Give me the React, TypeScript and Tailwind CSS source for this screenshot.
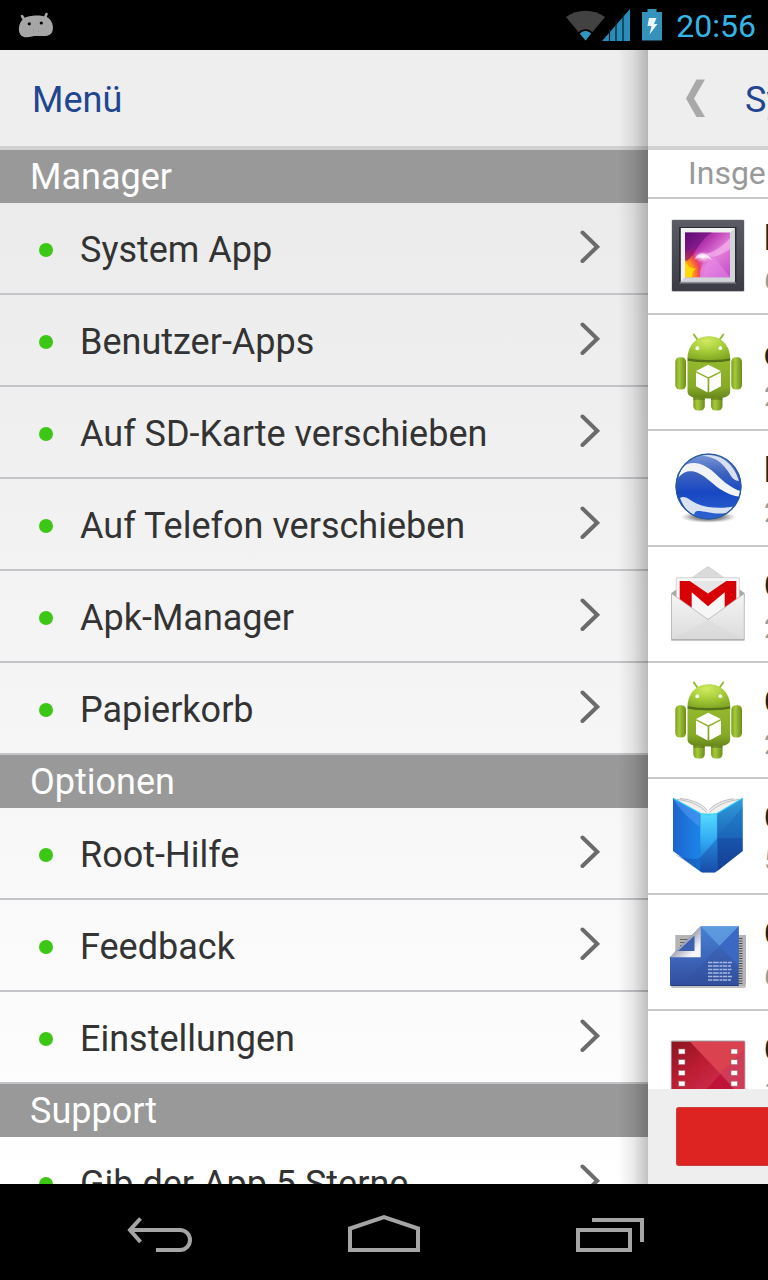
import type { ReactNode } from "react";

type Section = { title: string; items: string[] };

const sections: Section[] = [
  {
    title: "Manager",
    items: [
      "System App",
      "Benutzer-Apps",
      "Auf SD-Karte verschieben",
      "Auf Telefon verschieben",
      "Apk-Manager",
      "Papierkorb",
    ],
  },
  { title: "Optionen", items: ["Root-Hilfe", "Feedback", "Einstellungen"] },
  { title: "Support", items: ["Gib der App 5 Sterne"] },
];

function IconBox({ children }: { children: ReactNode }) {
  return (
    <svg viewBox="0 0 80 80" className="size-20 shrink-0" aria-hidden="true">
      {children}
    </svg>
  );
}

function GalleryIcon() {
  return (
    <IconBox>
      <defs>
        <linearGradient id="frame" x1="0" y1="0" x2="0" y2="1">
          <stop offset="0" stopColor="#5a5b65" />
          <stop offset="1" stopColor="#3b3c45" />
        </linearGradient>
        <linearGradient id="photo" x1="0" y1="0" x2="1" y2="1">
          <stop offset="0" stopColor="#4a0a68" />
          <stop offset="0.35" stopColor="#b93ab4" />
          <stop offset="0.6" stopColor="#e47fd9" />
          <stop offset="1" stopColor="#c04bc9" />
        </linearGradient>
        <radialGradient id="flame" cx="0" cy="0.95" r="0.75">
          <stop offset="0" stopColor="#ffe100" />
          <stop offset="0.4" stopColor="#ff9a10" />
          <stop offset="0.7" stopColor="#f0324a" stopOpacity="0.8" />
          <stop offset="1" stopColor="#e0309a" stopOpacity="0" />
        </radialGradient>
        <radialGradient id="glow">
          <stop offset="0" stopColor="#fff" />
          <stop offset="1" stopColor="#ffc0ee" stopOpacity="0" />
        </radialGradient>
      </defs>
      <rect x="3.5" y="3.5" width="73" height="72.5" rx="1.5" fill="#9a9aa0" opacity="0.6" />
      <rect x="4" y="4" width="72" height="71" rx="1" fill="url(#frame)" />
      <path d="M11 11h57.5v56.5H11z" fill="#2a2b31" />
      <path d="M11 67.500 13 65h53l2.500 2.500z" fill="#8c8d95" />
      <rect x="12.800" y="12" width="54" height="53.500" fill="#f1f1f3" />
      <path d="M66.800 12v53.500h-54l4.500-4.500H62V16.500z" fill="#d3d3da" />
      <rect x="17" y="16.500" width="45" height="44.800" fill="url(#photo)" />
      <path d="M17 61.300V36c5-2 10-7 14-12s9-7 13-7.500C36 25 29 34 26 42c6-4 14-4 20 2-8-2-14 3-14 17.300z" fill="url(#flame)" />
      <path d="M17 16.500h27C33 22 29 36 19 45l-2-1z" fill="#6a0c78" opacity="0.6" />
      <path d="M62 22c-8 9-17 14-24 16l6 3c7-1 12-4 18-8z" fill="#f9bdf2" opacity="0.6" />
      <path d="M62 61.300 47 42c-6 0-11 8-12 19.300z" fill="#e88bea" opacity="0.5" />
      <path d="M27 43c3-7 11-8 17 1-6-4-11-3-17-1z" fill="#fff" opacity="0.8" />
      <ellipse cx="35" cy="41" rx="10" ry="6" fill="url(#glow)" />
      <path d="M17 61.300V45c3 6 7 9 13 7-5 2-6 5-6 9.300z" fill="#ffd90a" />
    </IconBox>
  );
}

function RobotIcon() {
  return (
    <IconBox>
      <defs>
        <linearGradient id="limb" x1="0" y1="0" x2="1" y2="0">
          <stop offset="0" stopColor="#7b9c22" />
          <stop offset="0.35" stopColor="#a5ca39" />
          <stop offset="1" stopColor="#6b8c1c" />
        </linearGradient>
        <linearGradient id="torso" x1="0" y1="0" x2="0" y2="1">
          <stop offset="0" stopColor="#94b92d" />
          <stop offset="0.7" stopColor="#86aa26" />
          <stop offset="1" stopColor="#66851a" />
        </linearGradient>
        <radialGradient id="head" cx="0.45" cy="0.2" r="0.8">
          <stop offset="0" stopColor="#d2ea62" />
          <stop offset="0.5" stopColor="#a8cf3a" />
          <stop offset="1" stopColor="#84aa25" />
        </radialGradient>
      </defs>
      <path d="m25.800 2.500 5 7M55.300 2.500l-5 7" stroke="#94b933" strokeWidth="2" strokeLinecap="round" />
      <rect x="25.300" y="58" width="11.500" height="20.500" rx="4.500" fill="url(#limb)" />
      <rect x="43" y="58" width="11.500" height="20.500" rx="4.500" fill="url(#limb)" />
      <path d="M25.300 62h11.500v6H25.300zM43 62h11.500v6H43z" fill="#4d6810" opacity="0.45" />
      <rect x="7.300" y="25.200" width="10.700" height="32.300" rx="4.500" fill="url(#limb)" />
      <rect x="63.300" y="25.200" width="10.700" height="32.300" rx="4.500" fill="url(#limb)" />
      <path d="M19.500 28h42.700v31c0 4-2.500 6-8 6.800-8 1-18 1-26.700 0-5.500-.8-8-2.800-8-6.800z" fill="url(#torso)" />
      <path d="M19.500 28.500c10 2.500 32 2.500 42.700 0V26H19.500z" fill="#55721a" />
      <path d="M19.500 26C20 12.500 29 4.300 40.800 4.300S61.700 12.500 62.200 26c-8 2.600-34 2.600-42.700 0z" fill="url(#head)" />
      <circle cx="29.300" cy="16.200" r="1.900" fill="#fff" />
      <circle cx="52.300" cy="16.200" r="1.900" fill="#fff" />
      <path d="m40.300 32.700 12.500 6.400-12.500 6.200L28 39.100zM28 40.600l11.600 5.800v14L28 54.200zM53 40.600l-11.700 5.800v14L53 54.200z" fill="#fff" />
    </IconBox>
  );
}

function EarthIcon() {
  return (
    <IconBox>
      <defs>
        <linearGradient id="sea" x1="0" y1="0" x2="0" y2="1">
          <stop offset="0" stopColor="#7d9bd8" />
          <stop offset="0.3" stopColor="#3d62bf" />
          <stop offset="0.6" stopColor="#1847c4" />
          <stop offset="1" stopColor="#2f64d2" />
        </linearGradient>
        <radialGradient id="ground">
          <stop offset="0" stopColor="#222" stopOpacity="0.9" />
          <stop offset="0.6" stopColor="#444" stopOpacity="0.5" />
          <stop offset="1" stopColor="#888" stopOpacity="0" />
        </radialGradient>
        <clipPath id="globe">
          <circle cx="40.500" cy="38.500" r="32" />
        </clipPath>
      </defs>
      <ellipse cx="40.500" cy="69" rx="28" ry="6" fill="url(#ground)" />
      <circle cx="40.500" cy="38.500" r="33" fill="url(#sea)" />
      <g clipPath="url(#globe)" fill="#f1f3f6">
        <path d="M10 30C13 20 16 14.500 27 15c13 1 21 12 30 19.500C63 39 68 42 73 43v6c-8-1-15-4-21-8C43 35 36 26 26 23.500c-6-1-11 .5-16 6.500z" />
        <path d="M33 7.500c8-1.500 16 0 22 3.500 8 5 13 12 16 22-4-.5-6-2-8-5-4-7-9-13-15-16.500-5-2.500-10-3.500-15-4z" fill="#d9e0ef" />
        <path d="M12 50c2-1.500 5-1 8 .5C25 54 31 57.500 40 59c9 1.200 19 1 29-1-4 5-9 7.500-15 7.500-9 .5-18-2.500-24-2.500-3 0-4 2-4 6C20 65 15 58 12 50z" fill="#d8e2f0" />
      </g>
      <circle cx="40.500" cy="38.500" r="32.400" fill="none" stroke="#2a5999" strokeWidth="1.300" />
    </IconBox>
  );
}

function MailIcon() {
  return (
    <IconBox>
      <defs>
        <linearGradient id="paper" x1="0" y1="0" x2="0" y2="1">
          <stop offset="0" stopColor="#f4f4f4" />
          <stop offset="1" stopColor="#dcdcdc" />
        </linearGradient>
      </defs>
      <path d="M23 14.500 40 2.500l17 12z" fill="#dadada" stroke="#c2c2c2" strokeWidth="0.600" />
      <path d="M3.500 29 9 25h62l5.300 4v10h-73z" fill="#a6a6a6" />
      <path d="M8.300 13.700h63V55h-63z" fill="#f6f6f6" stroke="#c6c6c6" strokeWidth="0.700" />
      <path d="m21.500 17 18.500 13L58.500 17z" fill="#e6e6e6" />
      <path d="M11.700 17h10L40 29.500 58.300 17h10v32H56.700V28.300L40 42.300l-16.300-14V49h-12z" fill="#d70005" />
      <path d="M3.500 29.500 40 55.500l36.300-26v46.200H3.500z" fill="url(#paper)" stroke="#b1b1b1" strokeWidth="0.800" strokeLinejoin="round" />
      <path d="M4.500 75 40 55.500 75.500 75z" fill="#cfcfcf" opacity="0.200" />
      <path d="M3.300 76h73.200" stroke="#9a9a9a" strokeWidth="1.200" />
    </IconBox>
  );
}

function BookIcon() {
  return (
    <IconBox>
      <defs>
        <linearGradient id="coverLeft" x1="0" y1="0" x2="1" y2="0">
          <stop offset="0" stopColor="#1c63cd" />
          <stop offset="1" stopColor="#1c86e8" />
        </linearGradient>
        <linearGradient id="coverRight" x1="0" y1="0" x2="0" y2="1">
          <stop offset="0" stopColor="#2e9fdd" />
          <stop offset="0.600" stopColor="#1c5eb4" />
          <stop offset="1" stopColor="#174190" />
        </linearGradient>
        <linearGradient id="spine" x1="0" y1="0" x2="0" y2="1">
          <stop offset="0" stopColor="#55dcff" />
          <stop offset="0.500" stopColor="#2fa5f2" />
          <stop offset="1" stopColor="#1a55b4" />
        </linearGradient>
      </defs>
      <path d="M7 2.500c10-1 25 3 33 13 6-10 20-14 33-13L50 20H30z" fill="#f0f0f0" />
      <path d="M9 3.500c12 1 22 5 30 13M12 2.500c12 1 22 5 27.500 12M71 3.500C59 5 49 9 41.500 16.500M66 2.800C55 4 47 8 41 14" fill="none" stroke="#b6b6b6" strokeWidth="0.900" />
      <path d="M5 2.300 32.500 17.500v58.300L5 55z" fill="url(#coverLeft)" />
      <path d="M74.700 2.300 49 17.500v57.800L74.700 55z" fill="url(#coverRight)" />
      <path d="M32 17.500c5 1.200 12 1.200 17.300 0v57.300l-2.300 1.700H34l-2-1.500z" fill="url(#spine)" />
      <path d="M5 2.300 32.500 17.500v14C22 24 12 14 5 2.300z" fill="#5a9df5" opacity="0.500" />
      <path d="M49.300 41 74.700 11v31z" fill="#1868bd" opacity="0.450" />
      <path d="M5 57c10 6 20 7 27 5l17.300-20h25.400v13L49.300 75l-2.300 1.500H34z" fill="#123c95" opacity="0.350" />
      <path d="m5 2.300 27.500 15.200c5 1 11 1 16.500 0L74.700 2.300" fill="none" stroke="#27c8f5" strokeWidth="1.200" />
      <path d="M32 18v57M49.300 18v57" stroke="#1c6ed0" strokeWidth="0.600" opacity="0.700" />
    </IconBox>
  );
}

function OfficeIcon() {
  return (
    <IconBox>
      <defs>
        <linearGradient id="folder" x1="0" y1="0" x2="0" y2="1">
          <stop offset="0" stopColor="#4681d2" />
          <stop offset="0.600" stopColor="#3c62b6" />
          <stop offset="1" stopColor="#314e9c" />
        </linearGradient>
        <linearGradient id="fold" x1="0" y1="0" x2="1" y2="1">
          <stop offset="0.450" stopColor="#9b9cac" />
          <stop offset="0.800" stopColor="#f5f5fa" />
        </linearGradient>
      </defs>
      <rect x="3" y="72" width="75" height="4" rx="2" fill="#777" opacity="0.450" />
      <path d="M7.300 23H78v48c0 2-1 3-3 3H60L7.300 45z" fill="#b4b4b4" />
      <path d="M12 27.500h14M12 30.500h10M12 33.500h6" stroke="#666" />
      <path d="M72.500 26v46" stroke="#4e4e4e" strokeWidth="4" strokeDasharray="1 1.500" />
      <path d="M32.700 14.300h38V74H4c-1.300 0-2-.7-2-2V45.300z" fill="url(#folder)" />
      <path d="M32.700 14.300h38L51.500 34z" fill="#69a8e6" opacity="0.650" />
      <path d="M70.700 14.300V54L51.500 34z" fill="#3b68c2" />
      <path d="m51.500 34 19.200 20v20H13z" fill="#314f9e" opacity="0.350" />
      <path d="M32.700 14.300v31H2z" fill="url(#fold)" />
      <path d="M26.500 23.500V39H10z" fill="#3c5faf" />
      <path d="M40 50.500h24M40 54h23M40 57.500h23.500M40 61h22M40 64.500h24M40 68h23" stroke="#a9b8df" strokeWidth="1.500" strokeDasharray="4 0.700 6 0.800 3 0.500" />
      <path d="M2.500 73.500h68" stroke="#233c7d" />
    </IconBox>
  );
}

function FilmIcon() {
  const holes = [21, 31.7, 42.4, 53.1];
  return (
    <IconBox>
      <defs>
        <linearGradient id="film" x1="0" y1="0" x2="1" y2="1">
          <stop offset="0" stopColor="#8c1420" />
          <stop offset="0.400" stopColor="#bd1c32" />
          <stop offset="1" stopColor="#d83a62" />
        </linearGradient>
      </defs>
      <rect x="2.800" y="12.500" width="74.500" height="56" rx="1.500" fill="#a8a8a8" />
      <rect x="3.700" y="13.700" width="72.600" height="54" fill="url(#film)" />
      <path d="M22 13.700h54.300v8L52.500 46z" fill="#da4250" />
      <path d="M76.300 21.700v46H72L52.500 46z" fill="#cf3b58" />
      <path d="M52.500 46 72 67.700H32z" fill="#bf1438" />
      {holes.map((y) => (
        <g key={y} fill="#fafafa" stroke="#9a6468" strokeWidth="0.600">
          <rect x="10.500" y={y} width="6.500" height="5" />
          <rect x="63" y={y} width="6.500" height="5" />
        </g>
      ))}
    </IconBox>
  );
}

const apps: { icon: ReactNode; name: string; size: string }[] = [
  { icon: <GalleryIcon />, name: "F", size: "6" },
  { icon: <RobotIcon />, name: "c", size: "2" },
  { icon: <EarthIcon />, name: "E", size: "2" },
  { icon: <MailIcon />, name: "G", size: "2" },
  { icon: <RobotIcon />, name: "G", size: "2" },
  { icon: <BookIcon />, name: "G", size: "5" },
  { icon: <OfficeIcon />, name: "G", size: "6" },
  { icon: <FilmIcon />, name: "G", size: "1" },
];

function StatusBar() {
  return (
    <header className="flex h-[50px] shrink-0 items-center bg-black pr-3 pl-4">
      <svg viewBox="0 0 40 32" className="h-8 w-10" aria-hidden="true">
        <path d="m6 7 3 5M30.500 5l-2 5" stroke="#a6a6a6" strokeWidth="2.600" strokeLinecap="round" />
        <path d="M7.500 9.500C12 6 25 5.500 31 8c5 3 7 9 5.500 14-1 3.500-4 5-8 5-5 .3-9-.5-12.500.5-5 1.500-10 1.200-12-2.500-2.500-5-.5-12 3.500-15.500z" fill="#a6a6a6" />
        <circle cx="13.300" cy="14.800" r="1.600" fill="#000" />
        <circle cx="25.300" cy="14" r="1.600" fill="#000" />
        <path d="M17.500 20v1M17.500 22.500v1M22.500 22v1" stroke="#8a8a8a" />
      </svg>
      <div className="ml-auto flex items-center">
        <svg viewBox="0 0 40 32" className="h-8 w-10" aria-hidden="true">
          <path d="M0 8C12-.5 27-.5 39 8L19.500 31.500z" fill="#424242" />
          <path d="M14 24.500c3-3.500 8-3.500 11 0l-5.500 7z" fill="#2f96c1" />
          <path d="M13 24c3.500-4 9.500-4 13 0" fill="none" stroke="#000" strokeWidth="1.300" />
        </svg>
        <svg viewBox="0 0 28 32" className="-ml-1 h-8 w-7" aria-hidden="true">
          <path d="M28 0v32H0z" fill="#2a8db9" />
          <path d="M7.500 20v12M14 10v22M21 4v28" stroke="#02202c" strokeWidth="1.200" />
        </svg>
        <svg viewBox="0 0 20 32" className="ml-3 h-8 w-5" aria-hidden="true">
          <path d="M5.500 0h9v3H20v28.500H0V3h5.500z" fill="#3592ba" />
          <path d="M7 9h7.500l-2.500 6h3.500L7.500 25.500 9.500 17H5.500z" fill="#eaf5fa" />
        </svg>
        <time className="ml-[14px] pt-[2px] text-[32px] leading-10 text-[#33b5e5]">20:56</time>
      </div>
    </header>
  );
}

function MenuRow({ label }: { label: string }) {
  return (
    <li className="border-b-2 border-[#c4c4c8]">
      <button type="button" className="flex h-[90px] w-full items-center pt-1 pr-12 pl-[39px] text-left">
        <span className="size-[14px] shrink-0 rounded-full bg-[#3bc714]" />
        <span className="ml-[27px] flex-1 whitespace-nowrap">{label}</span>
        <svg viewBox="0 0 20 40" className="h-10 w-5" fill="none" aria-hidden="true">
          <path d="m2.500 2.500 14.700 14.300L2.500 31" stroke="#6a6b6d" strokeWidth="4" strokeLinecap="round" />
        </svg>
      </button>
    </li>
  );
}

export default function App() {
  return (
    <div className="flex h-screen flex-col overflow-hidden bg-black font-['Roboto','Noto_Sans',sans-serif]">
      <StatusBar />
      <main className="flex min-h-0 flex-1">
        <nav aria-label="Menü" className="relative flex min-w-0 flex-1 flex-col overflow-hidden bg-linear-to-b from-[#e8e8e8] to-white text-[36px] leading-[42px] text-[#333]">
          <h1 className="flex h-[100px] shrink-0 items-center border-b-4 border-[#d1d1d1] bg-[#eee] px-8 pt-1 text-[#21458f]">
            Menü
          </h1>
          <div className="min-h-0 flex-1 overflow-hidden">
            {sections.map((section) => (
              <section key={section.title}>
                <h2 className="flex h-[53px] items-center bg-[#999] px-[30px] text-white">{section.title}</h2>
                <ul>
                  {section.items.map((item) => (
                    <MenuRow key={item} label={item} />
                  ))}
                </ul>
              </section>
            ))}
          </div>
          <div className="pointer-events-none absolute inset-y-0 right-0 w-[30px] bg-linear-to-r from-transparent via-black/8 to-black/24" />
        </nav>

        <section aria-label="System App" className="flex w-[120px] shrink-0 flex-col overflow-hidden bg-white whitespace-nowrap">
          <div className="flex h-[100px] shrink-0 items-center border-b-4 border-[#d1d1d1] bg-[#eee] pl-[38px]">
            <button type="button" aria-label="Zurück" className="shrink-0">
              <svg viewBox="0 0 20 40" className="h-10 w-5" aria-hidden="true">
                <path d="M10.500 1.500h8.500L8 20.500l11 18.500h-8.500L0 20.500z" fill="#a9a9a9" />
              </svg>
            </button>
            <span className="ml-[39px] pt-1 text-[36px] leading-[42px] text-[#21458f]">System App</span>
          </div>
          <p className="h-[49px] shrink-0 border-b-2 border-[#c8c8cd] pl-10 text-[32px] leading-[47px] text-[#999]">Insge</p>
          <ul className="min-h-0 flex-1 overflow-hidden">
            {apps.map((app, i) => (
              <li key={i} className="flex h-[116px] items-center gap-4 border-b-2 border-[#c8c8cd] pl-5">
                {app.icon}
                <div className="shrink-0 pt-1">
                  <p className="text-[36px] leading-[42px] font-bold text-[#222]">{app.name}</p>
                  <p className="mt-1 text-[28px] leading-9 text-[#999]">{app.size}</p>
                </div>
              </li>
            ))}
          </ul>
          <footer className="h-[95px] shrink-0 bg-[#eee] pt-[18px] pl-7">
            <button type="button" aria-label="Deinstallieren" className="block h-[59px] w-full rounded-l-[3px] border-y border-l border-[#c4403c] bg-[#de2323]" />
          </footer>
        </section>
      </main>

      <footer className="flex h-24 shrink-0 items-center bg-black px-12 text-[#a5a5a5]">
        <button type="button" aria-label="Zurück" className="flex flex-1 justify-center">
          <svg viewBox="0 0 80 48" className="h-12 w-20" fill="none" stroke="currentColor" strokeWidth="4" aria-hidden="true">
            <path d="M20.500 10.500 10 22l10.500 12M10 22h50a10 10 0 0 1 0 20H36" />
          </svg>
        </button>
        <button type="button" aria-label="Startseite" className="flex flex-1 justify-center">
          <svg viewBox="0 0 80 48" className="h-12 w-20" fill="none" stroke="currentColor" strokeWidth="4" aria-hidden="true">
            <path d="M6 42V20.500L40 9l34 11.500V42z" />
          </svg>
        </button>
        <button type="button" aria-label="Letzte Apps" className="flex flex-1 justify-center">
          <svg viewBox="0 0 80 48" className="h-12 w-20" fill="none" stroke="currentColor" strokeWidth="4" aria-hidden="true">
            <path d="M10 22h52v20H10zM24 12h50v22" />
          </svg>
        </button>
      </footer>
    </div>
  );
}
